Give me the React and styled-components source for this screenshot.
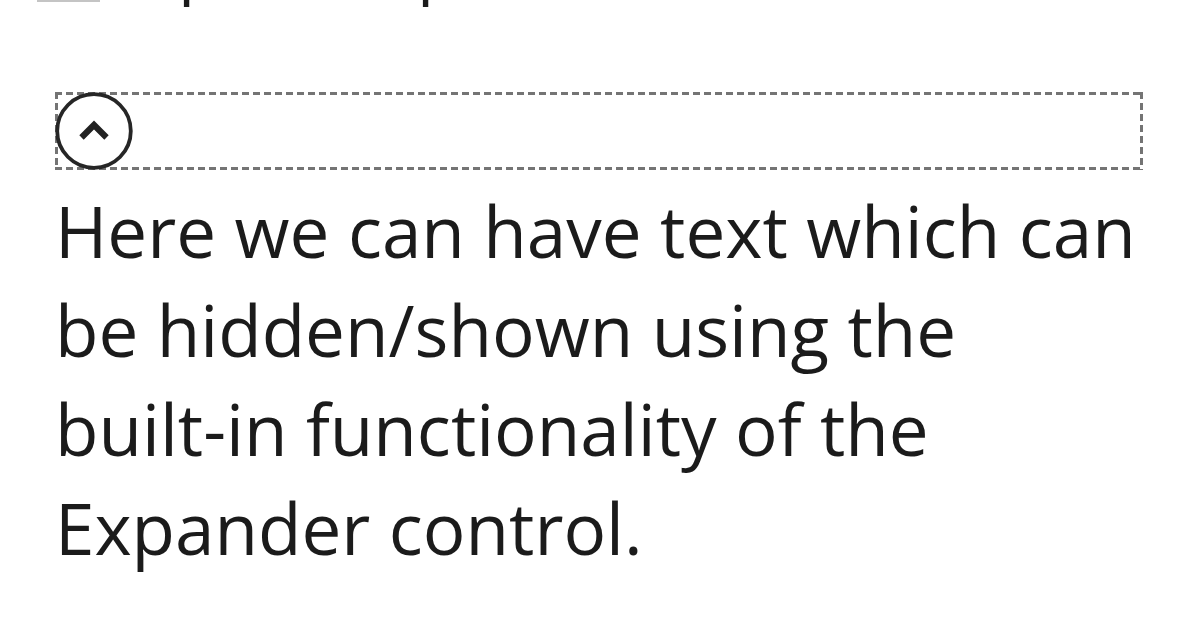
import React from "react";
import styled, { createGlobalStyle } from "styled-components";

const GlobalStyle = createGlobalStyle`
  html, body {
    margin: 0;
    padding: 0;
    background: #ffffff;
    overflow: hidden;
  }
  #root {
    width: 1198px;
    height: 628px;
    overflow: hidden;
  }
`;

const Page = styled.div`
  width: 1198px;
  height: 628px;
  overflow: hidden;
  font-family: "Open Sans", "Noto Sans", sans-serif;
  color: #1b1b1b;
`;

const PrevHeader = styled.div`
  display: flex;
  align-items: flex-start;
  height: 0;
  margin-left: 37px;
  overflow: visible;
`;

const PrevMark = styled.div`
  width: 63px;
  height: 3px;
  background: #c4c4c4;
  margin-top: -1px;
`;

const PrevTitle = styled.div`
  font-size: 66px;
  line-height: 66px;
  margin-left: 7px;
  margin-top: -68px;
  white-space: nowrap;
`;

const Expander = styled.section`
  margin: 92px 0 0 55px;
  width: 1088px;
`;

const dash = (dir) =>
  `repeating-linear-gradient(${dir}, #747474 0 7px, transparent 7px 11px)`;

const HeaderBar = styled.div`
  height: 78px;
  display: flex;
  align-items: center;
  background:
    ${dash("90deg")} top left / 100% 3px no-repeat,
    ${dash("90deg")} bottom left / 100% 3px no-repeat,
    ${dash("180deg")} top left / 3px 100% no-repeat,
    ${dash("180deg")} top right / 3px 100% no-repeat;
`;

const ToggleButton = styled.button`
  width: 78px;
  height: 78px;
  padding: 0;
  border: 0;
  background: transparent;
  display: block;
  cursor: pointer;
  svg {
    display: block;
  }
`;

const Body = styled.p`
  margin: 11px 0 0 0;
  font-size: 71px;
  line-height: 99px;
  width: 1088px;
`;

const NoWrap = styled.span`
  white-space: nowrap;
`;

function ChevronCircle() {
  return (
    <svg width="78" height="78" viewBox="0 0 78 78" aria-hidden="true">
      <circle cx="39" cy="39" r="36.8" fill="#ffffff" stroke="#262626" strokeWidth="3.8" />
      <polyline
        points="26.5,45.5 39,33 51.5,45.5"
        fill="none"
        stroke="#222222"
        strokeWidth="6.2"
        strokeLinejoin="miter"
      />
    </svg>
  );
}

export default function App() {
  return (
    <>
      <GlobalStyle />
      <Page>
        <PrevHeader>
          <PrevMark />
          <PrevTitle>Expander panel</PrevTitle>
        </PrevHeader>
        <Expander>
          <HeaderBar>
            <ToggleButton aria-label="Collapse">
              <ChevronCircle />
            </ToggleButton>
          </HeaderBar>
          <Body>
            Here we can have text which can be hidden/shown using the{" "}
            <NoWrap>built-in</NoWrap> functionality of the Expander control.
          </Body>
        </Expander>
      </Page>
    </>
  );
}
